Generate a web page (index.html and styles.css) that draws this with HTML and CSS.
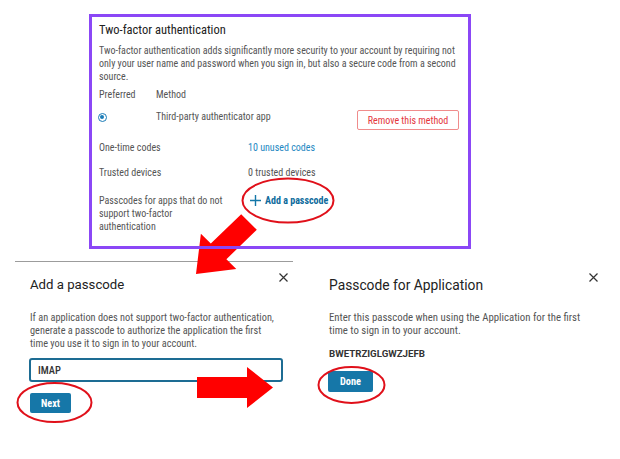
FILE: index.html
```html
<!DOCTYPE html>
<html lang="en">
<head>
<meta charset="utf-8">
<title>Two-factor authentication</title>
<link rel="stylesheet" href="styles.css">
</head>
<body>
<div class="page">
  <section class="tfa">
    <h2 class="tfa-title">Two-factor authentication</h2>
    <p class="tfa-desc">Two-factor authentication adds significantly more security to your account by requiring not only your user name and password when you sign in, but also a secure code from a second source.</p>
    <div class="row head-row">
      <span>Preferred</span>
      <span>Method</span>
    </div>
    <div class="row method-row">
      <span class="radio"><span class="radio-dot"></span></span>
      <span>Third-party authenticator app</span>
      <button class="btn-remove">Remove this method</button>
    </div>
    <div class="row kv kv-codes">
      <span>One-time codes</span>
      <span class="link">10 unused codes</span>
    </div>
    <div class="row kv kv-trusted">
      <span>Trusted devices</span>
      <span>0 trusted devices</span>
    </div>
    <div class="row kv kv-pass">
      <span class="kv-label">Passcodes for apps that do not support two-factor authentication</span>
      <span class="add-link">
        <svg class="plus" width="11" height="11" viewBox="0 0 11 11"><path d="M5.5 0V11M0 5.5H11" stroke="#1477a8" stroke-width="1.4" fill="none"/></svg>
        <span>Add a passcode</span>
      </span>
    </div>
  </section>

  <div class="dialogs">
    <section class="dlg dlg-left">
      <div class="dlg-head">
        <h3 class="dlg-title dlg-title-left">Add a passcode</h3>
        <svg class="close" width="9" height="9" viewBox="0 0 9 9"><path d="M0.5 0.5L8.5 8.5M8.5 0.5L0.5 8.5" stroke="#333" stroke-width="1.2"/></svg>
      </div>
      <p class="dlg-text dlg-text-left">If an application does not support two-factor authentication, generate a passcode to authorize the application the first time you use it to sign in to your account.</p>
      <div class="input">IMAP</div>
      <button class="btn-primary btn-next">Next</button>
    </section>

    <section class="dlg dlg-right">
      <div class="dlg-head">
        <h3 class="dlg-title dlg-title-right">Passcode for Application</h3>
        <svg class="close" width="9" height="9" viewBox="0 0 9 9"><path d="M0.5 0.5L8.5 8.5M8.5 0.5L0.5 8.5" stroke="#333" stroke-width="1.2"/></svg>
      </div>
      <p class="dlg-text dlg-text-right">Enter this passcode when using the Application for the first time to sign in to your account.</p>
      <div class="code">BWETRZIGLGWZJEFB</div>
      <button class="btn-primary btn-done">Done</button>
    </section>
  </div>

  <svg class="annot" width="620" height="459" viewBox="0 0 620 459">
    <polygon points="241.2,214.2 210.8,243.6 200.9,233.7 196,274 236.3,269.1 226.4,259.2 256.8,229.8" fill="#ff0000"/>
    <polygon points="197,377 247,377 247,367 273,387.5 247,408 247,398 197,398" fill="#ff0000"/>
    <ellipse cx="288" cy="200.5" rx="45.5" ry="22" fill="none" stroke="#e0101a" stroke-width="2"/>
    <ellipse cx="54.5" cy="402.5" rx="37" ry="19.5" fill="none" stroke="#e0101a" stroke-width="2"/>
    <ellipse cx="351.5" cy="385" rx="33" ry="18" fill="none" stroke="#e0101a" stroke-width="2"/>
  </svg>
</div>
</body>
</html>
```
FILE: styles.css
```css
* { box-sizing: border-box; }
html, body { margin: 0; padding: 0; background: #fff; }
body {
  font-family: Roboto, "Noto Sans", Arial, sans-serif;
  color: #555;
  font-size: 10px;
  line-height: 13px;
}
.page {
  position: relative;
  width: 620px;
  height: 459px;
  overflow: hidden;
}
h2, h3, p { margin: 0; font-weight: normal; }
button { font-family: inherit; cursor: pointer; }

/* ---------- top card ---------- */
.tfa {
  position: relative;
  z-index: 2;
  margin: 14px 0 0 89px;
  width: 382px;
  height: 235px;
  border: 3px solid #8b47f6;
  padding: 4px 8px 0 7px;
  font-stretch: 75%;
}
.tfa-title {
  font-size: 12.5px;
  line-height: 17px;
  color: #222;
}
.tfa-desc {
  margin-top: 5.5px;
  max-width: 362px;
}
.row { display: grid; align-items: start; }
.head-row {
  margin-top: 5px;
  grid-template-columns: 57px 1fr;
}
.method-row {
  margin-top: 9.5px;
  grid-template-columns: 57px 1fr auto;
}
.radio {
  width: 9px;
  height: 9px;
  margin: 2.5px 0 0 -1.5px;
  border: 1.3px solid #1b7cb8;
  border-radius: 50%;
  display: flex;
  align-items: center;
  justify-content: center;
}
.radio-dot {
  width: 4px;
  height: 4px;
  border-radius: 50%;
  background: #1b7cb8;
}
.btn-remove {
  width: 102px;
  height: 20px;
  padding: 0;
  margin-right: 1px;
  background: #fff;
  border: 1px solid #f08c8c;
  border-radius: 2px;
  color: #e4363c;
  font-size: 10px;
  font-stretch: 75%;
}
.kv { grid-template-columns: 149px 1fr; }
.kv-codes { margin-top: 10.5px; }
.kv-trusted { margin-top: 12px; }
.kv-pass { margin-top: 15px; }
.kv-label { max-width: 130px; }
.link { color: #1d87c2; }
.add-link {
  display: flex;
  align-items: center;
  gap: 4px;
  color: #0e6b9c;
  font-weight: bold;
  margin-left: 2px;
}
.plus { flex: none; margin-top: 1px; }

/* ---------- dialogs ---------- */
.dialogs {
  display: flex;
  align-items: flex-start;
  margin-top: 12px;
}
.dlg {
  padding: 0 5.5px 0 15px;
}
.dlg-left {
  margin-left: 15px;
  width: 278px;
  border-top: 1px solid #9c9c9c;
}
.dlg-right {
  margin-left: 21px;
  width: 289px;
  border-top: 1px solid transparent;
}
.dlg-head {
  display: flex;
  justify-content: space-between;
  align-items: flex-start;
  padding-top: 10px;
}
.dlg-title {
  margin-top: 3px;
  line-height: 20px;
  color: #222;
}
.dlg-title-left { font-size: 13.2px; }
.dlg-title-right { font-size: 13.8px; }
.close { flex: none; margin-top: 0.5px; }
.dlg-text {
  margin-top: 15.5px;
  font-stretch: 75%;
}
.dlg-text-left { max-width: 247px; font-size: 10.3px; }
.dlg-text-right { max-width: 262px; font-size: 10.8px; }
.input {
  margin: 8.5px 0 0 -1px;
  width: 254px;
  height: 24px;
  border: 2px solid #1d6c93;
  border-radius: 3px;
  padding-left: 7px;
  display: flex;
  align-items: center;
  color: #333;
  font-weight: 500;
  font-stretch: 75%;
  font-size: 10.5px;
}
.btn-primary {
  display: block;
  padding: 0;
  border: none;
  border-radius: 2px;
  background: #1677a8;
  color: #fff;
  font-size: 10.3px;
  font-weight: bold;
  font-stretch: 75%;
}
.btn-next {
  margin-top: 11px;
  width: 41px;
  height: 20px;
}
.code {
  margin-top: 10px;
  color: #333;
  font-size: 9.7px;
  font-weight: bold;
}
.btn-done {
  margin: 11.5px 0 0 -1px;
  width: 45px;
  height: 21px;
}

/* ---------- annotations ---------- */
.annot {
  position: absolute;
  left: 0;
  top: 0;
  z-index: 1;
  pointer-events: none;
}
```
